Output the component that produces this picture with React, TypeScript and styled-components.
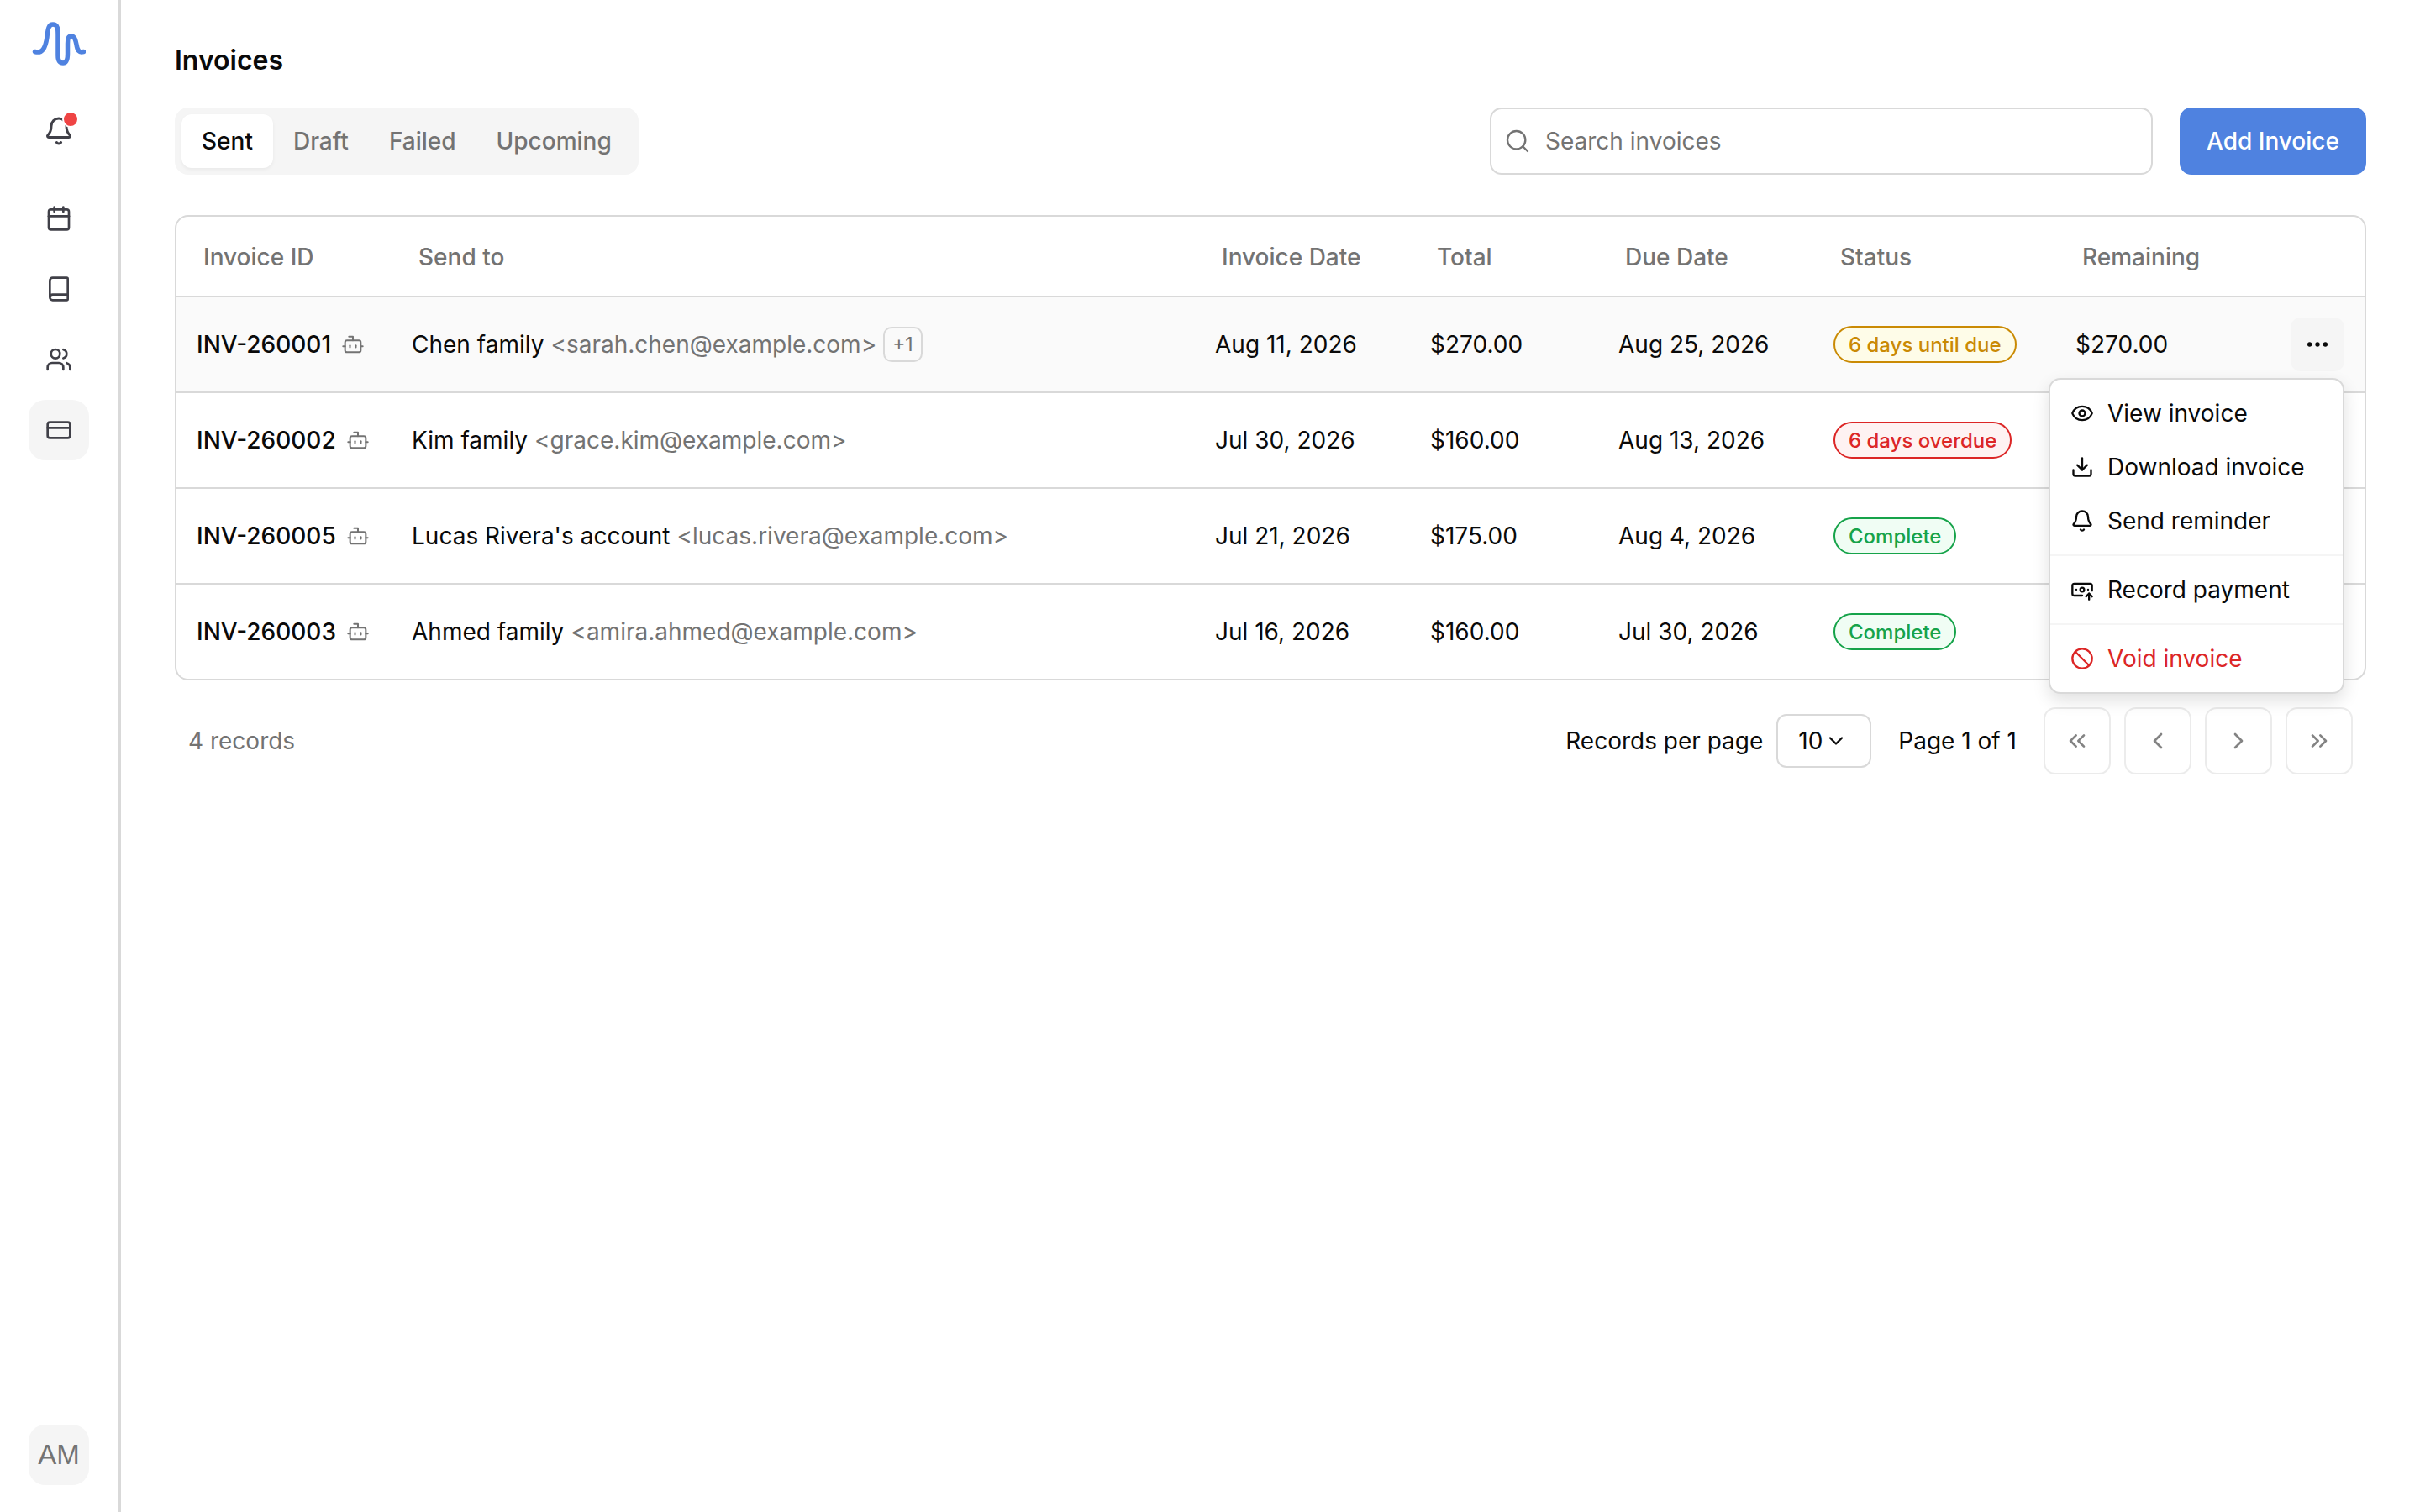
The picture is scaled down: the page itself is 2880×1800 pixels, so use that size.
import React from 'react'
import styled, { createGlobalStyle } from 'styled-components'
import {
  Ban,
  BanknoteArrowUp,
  Bell,
  Book,
  Bot,
  Calendar,
  ChevronDown,
  ChevronLeft,
  ChevronRight,
  ChevronsLeft,
  ChevronsRight,
  CreditCard,
  Download,
  Ellipsis,
  Eye,
  Search,
  Users,
} from 'lucide-react'

const GlobalStyle = createGlobalStyle`
  html, body {
    margin: 0;
    background: #fff;
    font-family: Inter, "Liberation Sans", sans-serif;
    color: #0a0a0a;
    -webkit-font-smoothing: antialiased;
  }
  * {
    box-sizing: border-box;
  }
`

const Shell = styled.div`
  display: flex;
  height: 100vh;
`

const Sidebar = styled.nav`
  width: 144px;
  flex: none;
  display: flex;
  flex-direction: column;
  align-items: center;
  padding: 20px 0 32px;
  border-right: 4px solid #d9d9d9;
  color: #404048;
`

const Logo = styled.svg`
  width: 64px;
  height: 64px;
  margin-bottom: 36px;
`

const NavGroup = styled.div`
  display: flex;
  flex-direction: column;
  gap: 12px;
  margin-top: 32px;
`

const NavItem = styled.div<{ $active?: boolean }>`
  position: relative;
  width: 72px;
  height: 72px;
  display: flex;
  align-items: center;
  justify-content: center;
  border-radius: 20px;
  background: ${(p) => (p.$active ? '#f5f5f5' : 'transparent')};
`

const NotifyDot = styled.span`
  position: absolute;
  top: 12px;
  left: 40px;
  width: 20px;
  height: 20px;
  border: 2px solid #fff;
  border-radius: 50%;
  background: #ef4444;
`

const Avatar = styled.div`
  width: 72px;
  height: 72px;
  margin-top: auto;
  display: flex;
  align-items: center;
  justify-content: center;
  border-radius: 20px;
  background: #f5f5f5;
  color: #737373;
  font-family: 'Liberation Sans', Arial, sans-serif;
  font-size: 33px;
`

const Main = styled.main`
  flex: 1;
  min-width: 0;
  padding: 48px 64px 0;
`

const Title = styled.h1`
  margin: 0 0 32px;
  font-size: 32px;
  line-height: 48px;
  font-weight: 600;
`

const Toolbar = styled.div`
  display: flex;
  align-items: center;
  height: 80px;
  margin-bottom: 48px;
`

const Tabs = styled.div`
  display: flex;
  padding: 8px;
  border-radius: 16px;
  background: #f5f5f5;
`

const Tab = styled.div<{ $active?: boolean }>`
  height: 64px;
  display: flex;
  align-items: center;
  padding: 0 24px;
  border-radius: 12px;
  font-size: 28px;
  font-weight: 500;
  color: ${(p) => (p.$active ? '#0a0a0a' : '#737373')};
  background: ${(p) => (p.$active ? '#fff' : 'transparent')};
  box-shadow: ${(p) => (p.$active ? '0 2px 4px rgba(0, 0, 0, 0.05)' : 'none')};
`

const SearchBox = styled.div`
  width: 789px;
  height: 80px;
  margin-left: auto;
  display: flex;
  align-items: center;
  gap: 17px;
  padding: 0 15px;
  border: 2px solid #d9d9d9;
  border-radius: 14px;
  font-size: 28px;
  color: #737373;
`

const AddButton = styled.div`
  width: 222px;
  height: 80px;
  margin-left: 32px;
  display: flex;
  align-items: center;
  justify-content: center;
  border-radius: 14px;
  background: #4f82e0;
  color: #fff;
  font-size: 28px;
  font-weight: 500;
`

const Table = styled.div`
  border: 2px solid #d9d9d9;
  border-radius: 16px;
`

const Row = styled.div<{ $head?: boolean; $hover?: boolean }>`
  display: grid;
  grid-template-columns: 256px 956px 256px 224px 256px 288px 368px;
  align-items: center;
  height: ${(p) => (p.$head ? '96px' : '114px')};
  padding: ${(p) => (p.$head ? '2px 0 0 8px' : '0')};
  background: ${(p) => (p.$hover ? '#fafafa' : 'transparent')};
  border-bottom: 2px solid #d9d9d9;
  font-size: 28px;

  &:first-child {
    border-radius: 14px 14px 0 0;
  }
  &:last-child {
    height: 112px;
    border-bottom: none;
  }
`

const HeadCell = styled.div`
  padding-left: 24px;
  color: #737373;
  font-weight: 500;
`

const Cell = styled.div`
  position: relative;
  display: flex;
  align-items: center;
  padding-left: 24px;
  white-space: nowrap;
`

const IdCell = styled(Cell)`
  font-weight: 500;
  gap: 12px;
`

const RobotIcon = styled.span`
  display: flex;
  color: #737373;
`

const Email = styled.span`
  margin-left: 8px;
  color: #737373;
`

const MoreBadge = styled.span`
  height: 42px;
  margin-left: 8px;
  padding: 0 9px;
  display: flex;
  align-items: center;
  border: 2px solid #d9d9d9;
  border-radius: 10px;
  font-size: 23px;
  color: #737373;
`

const tones = {
  warn: { ink: '#ca8a04', bg: '#fefce8' },
  danger: { ink: '#dc2626', bg: '#fef2f2' },
  ok: { ink: '#16a34a', bg: '#f0fdf4' },
}

const Badge = styled.span<{ $tone: keyof typeof tones }>`
  height: 44px;
  padding: 0 16px;
  display: flex;
  align-items: center;
  border: 2px solid ${(p) => tones[p.$tone].ink};
  border-radius: 22px;
  background: ${(p) => tones[p.$tone].bg};
  color: ${(p) => tones[p.$tone].ink};
  font-size: 24px;
  font-weight: 500;
`

const RemainingCell = styled(Cell)`
  justify-content: space-between;
  padding-right: 24px;
`

const ActionButton = styled.div`
  width: 64px;
  height: 64px;
  display: flex;
  align-items: center;
  justify-content: center;
  border-radius: 12px;
  background: #f5f5f5;
`

const Menu = styled.div`
  position: absolute;
  z-index: 5;
  top: 72px;
  right: 24px;
  width: 352px;
  padding: 8px 0;
  border: 2px solid #d9d9d9;
  border-radius: 14px;
  background: #fff;
  box-shadow: 0 8px 20px rgba(0, 0, 0, 0.12);
`

const MenuItem = styled.div<{ $danger?: boolean }>`
  height: 64px;
  display: flex;
  align-items: center;
  gap: 16px;
  padding: 0 24px;
  font-size: 28px;
  color: ${(p) => (p.$danger ? '#dc2626' : '#0a0a0a')};
`

const MenuDivider = styled.div`
  height: 2px;
  margin: 8px 0;
  background: #f5f5f5;
`

const Footer = styled.div`
  display: flex;
  align-items: center;
  margin-top: 32px;
  padding: 0 16px;
  font-size: 28px;
`

const RecordCount = styled.span`
  margin-right: auto;
  color: #737373;
`

const PageSize = styled.div`
  width: 113px;
  height: 64px;
  margin: 0 32px 0 16px;
  display: flex;
  align-items: center;
  gap: 2px;
  padding-left: 24px;
  border: 2px solid #d9d9d9;
  border-radius: 12px;
`

const PageButtons = styled.div`
  display: flex;
  gap: 16px;
  margin-left: 32px;
`

const PageButton = styled.div`
  width: 80px;
  height: 80px;
  display: flex;
  align-items: center;
  justify-content: center;
  border: 2px solid #d9d9d9;
  border-radius: 14px;
  opacity: 0.5;
`

// the amounts of the lower rows sit behind the open menu, so they stay out
const invoices = [
  { id: 'INV-260001', name: 'Chen family', email: 'sarah.chen@example.com', extra: '+1', date: 'Aug 11, 2026', total: '$270.00', due: 'Aug 25, 2026', status: '6 days until due', tone: 'warn' as const },
  { id: 'INV-260002', name: 'Kim family', email: 'grace.kim@example.com', date: 'Jul 30, 2026', total: '$160.00', due: 'Aug 13, 2026', status: '6 days overdue', tone: 'danger' as const },
  { id: 'INV-260005', name: "Lucas Rivera's account", email: 'lucas.rivera@example.com', date: 'Jul 21, 2026', total: '$175.00', due: 'Aug 4, 2026', status: 'Complete', tone: 'ok' as const },
  { id: 'INV-260003', name: 'Ahmed family', email: 'amira.ahmed@example.com', date: 'Jul 16, 2026', total: '$160.00', due: 'Jul 30, 2026', status: 'Complete', tone: 'ok' as const },
]

const columns = ['Invoice ID', 'Send to', 'Invoice Date', 'Total', 'Due Date', 'Status', 'Remaining']

export default function App() {
  return (
    <>
      <GlobalStyle />
      <Shell>
        <Sidebar>
          <Logo viewBox="38 20 64 64" fill="none">
            <path
              d="M41.5 61.5C50 64 54 58 56 44C57 34 58 29 63 29C69 29 69 35 69 42L69 66C69 72 71 75 75 75C79 75 80.5 70 80.5 64L80.5 52C80.5 46 81 43 85 43C89 43 90 48 91 53C92 60 94 63 99.5 61.5"
              stroke="#4f82e0"
              strokeWidth="5.5"
              strokeLinecap="round"
            />
          </Logo>
          <NavItem>
            <Bell size={36} />
            <NotifyDot />
          </NavItem>
          <NavGroup>
            <NavItem>
              <Calendar size={32} />
            </NavItem>
            <NavItem>
              <Book size={32} />
            </NavItem>
            <NavItem>
              <Users size={32} />
            </NavItem>
            <NavItem $active>
              <CreditCard size={32} />
            </NavItem>
          </NavGroup>
          <Avatar>AM</Avatar>
        </Sidebar>
        <Main>
          <Title>Invoices</Title>
          <Toolbar>
            <Tabs>
              <Tab $active>Sent</Tab>
              <Tab>Draft</Tab>
              <Tab>Failed</Tab>
              <Tab>Upcoming</Tab>
            </Tabs>
            <SearchBox>
              <Search size={32} strokeWidth={1.75} />
              Search invoices
            </SearchBox>
            <AddButton>Add Invoice</AddButton>
          </Toolbar>
          <Table>
            <Row $head>
              {columns.map((c) => (
                <HeadCell key={c}>{c}</HeadCell>
              ))}
            </Row>
            {invoices.map((inv, i) => (
              <Row key={inv.id} $hover={i === 0}>
                <IdCell>
                  {inv.id}
                  <RobotIcon>
                    <Bot size={28} strokeWidth={1.75} />
                  </RobotIcon>
                </IdCell>
                <Cell>
                  {inv.name}
                  <Email>&lt;{inv.email}&gt;</Email>
                  {inv.extra && <MoreBadge>{inv.extra}</MoreBadge>}
                </Cell>
                <Cell>{inv.date}</Cell>
                <Cell>{inv.total}</Cell>
                <Cell>{inv.due}</Cell>
                <Cell>
                  <Badge $tone={inv.tone}>{inv.status}</Badge>
                </Cell>
                <RemainingCell>
                  {i === 0 && (
                    <>
                      $270.00
                      <ActionButton>
                        <Ellipsis size={32} />
                      </ActionButton>
                      <Menu>
                        <MenuItem>
                          <Eye size={28} />
                          View invoice
                        </MenuItem>
                        <MenuItem>
                          <Download size={28} />
                          Download invoice
                        </MenuItem>
                        <MenuItem>
                          <Bell size={28} />
                          Send reminder
                        </MenuItem>
                        <MenuDivider />
                        <MenuItem>
                          <BanknoteArrowUp size={28} />
                          Record payment
                        </MenuItem>
                        <MenuDivider />
                        <MenuItem $danger>
                          <Ban size={28} />
                          Void invoice
                        </MenuItem>
                      </Menu>
                    </>
                  )}
                </RemainingCell>
              </Row>
            ))}
          </Table>
          <Footer>
            <RecordCount>4 records</RecordCount>
            Records per page
            <PageSize>
              10
              <ChevronDown size={28} />
            </PageSize>
            Page 1 of 1
            <PageButtons>
              <PageButton>
                <ChevronsLeft size={32} />
              </PageButton>
              <PageButton>
                <ChevronLeft size={32} />
              </PageButton>
              <PageButton>
                <ChevronRight size={32} />
              </PageButton>
              <PageButton>
                <ChevronsRight size={32} />
              </PageButton>
            </PageButtons>
          </Footer>
        </Main>
      </Shell>
    </>
  )
}
